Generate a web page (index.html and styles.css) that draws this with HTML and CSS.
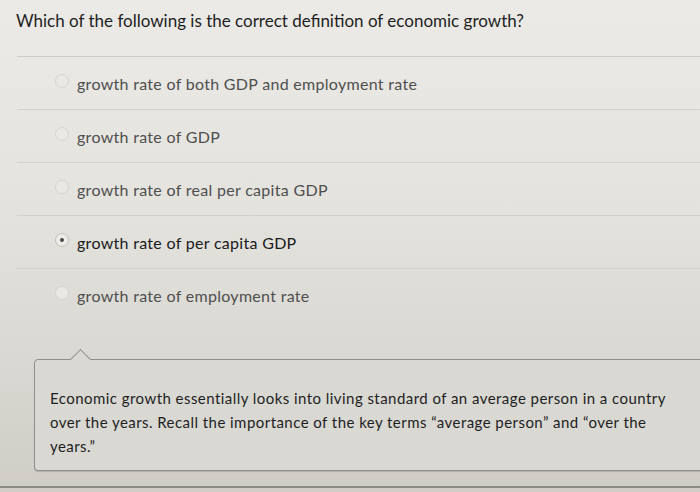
FILE: index.html
```html
<!DOCTYPE html>
<html>
<head>
<meta charset="utf-8">
<link rel="stylesheet" href="styles.css">
</head>
<body>
<div class="page">
  <div class="question">Which of the following is the correct definition of economic growth?</div>
  <div class="options">
    <div class="option"><span class="radio"></span><span class="label">growth rate of both GDP and employment rate</span></div>
    <div class="option"><span class="radio"></span><span class="label">growth rate of GDP</span></div>
    <div class="option"><span class="radio"></span><span class="label">growth rate of real per capita GDP</span></div>
    <div class="option selected"><span class="radio"></span><span class="label">growth rate of per capita GDP</span></div>
    <div class="option last"><span class="radio"></span><span class="label">growth rate of employment rate</span></div>
  </div>
  <div class="feedback">
    <div class="notch"></div>
    <p>Economic growth essentially looks into living standard of an average person in a country over the years. Recall the importance of the key terms “average person” and “over the years.”</p>
  </div>
  <div class="bottom"></div>
</div>
</body>
</html>
```
FILE: styles.css
```css
html, body {
  margin: 0;
  padding: 0;
}
body {
  width: 700px;
  height: 492px;
  overflow: hidden;
  font-family: Lato, "Open Sans", sans-serif;
  background: linear-gradient(180deg, #ebeae6 0%, #e4e3de 40%, #d9d7d1 75%, #cfcdc6 100%);
}
.page {
  display: flex;
  flex-direction: column;
  height: 492px;
}
.question {
  font-size: 17px;
  color: #1e1e1e;
  padding: 10px 0 0 16px;
  height: 57px;
  box-sizing: border-box;
  position: relative;
}
.question::after {
  content: "";
  position: absolute;
  left: 17px;
  right: 0;
  bottom: 0;
  border-bottom: 1px solid #cdcbc6;
}
.options {
  display: flex;
  flex-direction: column;
  margin-left: 17px;
}
.option {
  height: 53px;
  display: flex;
  align-items: center;
  border-bottom: 1px solid #d3d1cb;
  box-sizing: border-box;
  padding-left: 38px;
}
.option.last {
  border-bottom: none;
}
.radio {
  width: 14px;
  height: 14px;
  border-radius: 50%;
  border: 1px solid #d6d4cf;
  background: #e9e8e4;
  box-sizing: border-box;
  margin-right: 8px;
  display: flex;
  align-items: center;
  justify-content: center;
  margin-top: -5px;
}
.label {
  font-size: 16px;
  letter-spacing: 0.3px;
  color: #4f4f4f;
}
.option.selected .radio {
  border-color: #c4c2bd;
  background: #ecebe7;
}
.option.selected .radio::after {
  content: "";
  width: 4px;
  height: 4px;
  border-radius: 50%;
  background: #4a4a4a;
}
.option.selected .label {
  color: #1a1a1a;
}
.feedback {
  position: relative;
  margin: 37px -10px 0 34px;
  height: 112px;
  border: 1px solid #8f8e8a;
  border-radius: 4px;
  box-sizing: border-box;
  box-shadow: 0 1px 1px rgba(0,0,0,0.15);
  background: #d9d8d3;
}
.notch {
  position: absolute;
  left: 38px;
  top: -8px;
  width: 14px;
  height: 14px;
  background: #d9d8d3;
  border-left: 1px solid #8f8e8a;
  border-top: 1px solid #8f8e8a;
  transform: rotate(45deg);
}
.feedback p {
  margin: 26px 30px 0 15px;
  font-size: 15px;
  letter-spacing: 0.45px;
  line-height: 24px;
  color: #1e1e1e;
}
.bottom {
  margin-top: 15px;
  height: 2px;
  background: #8c8b86;
}
```
